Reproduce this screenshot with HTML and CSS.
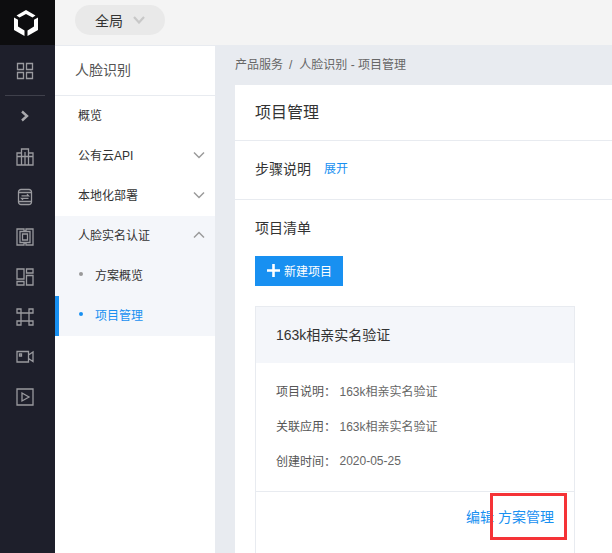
FILE: index.html
```html
<!DOCTYPE html>
<html lang="zh-CN">
<head>
<meta charset="utf-8">
<title>项目管理</title>
<link rel="stylesheet" href="styles.css">
</head>
<body>
<div class="app">
  <nav class="rail">
    <div class="logo">
      <svg width="24" height="26" viewBox="0 0 24 26"><path d="M12 0 21.500 5.500 18.500 7.500 12 4 5.500 7.500 2.500 5.500Z M0 7.500 4 9.700V16.500L10.500 20.500V26L0 20Z M24 7.500V20L13.500 26V20.500L20 16.500V9.700Z" fill="#fff"/></svg>
    </div>
    <div class="rail-item first">
      <svg class="ri" width="18" height="18" viewBox="0 0 18 18"><path d="M1.500 1.500h6v6h-6z M10.500 1.500h6v6h-6z M1.500 10.500h6v6h-6z M10.500 10.500h6v6h-6z"/></svg>
    </div>
    <div class="rail-sep"></div>
    <div class="rail-item rail-toggle">
      <svg width="10" height="12" viewBox="0 0 10 12"><path d="M2 1.500 7 6 2 10.500" fill="none" stroke="#a9a9ad" stroke-width="2.400"/></svg>
    </div>
    <div class="rail-item">
      <svg class="ri" width="18" height="18" viewBox="0 0 18 18"><path d="M1 5h4.500V1h7v4H17v12H1z M5.500 5v12 M12.500 5v12 M9 4v13 M1 8.500h16"/></svg>
    </div>
    <div class="rail-item">
      <svg class="ri" width="18" height="18" viewBox="0 0 18 18"><path d="M5 1.500h8a2.500 2.500 0 0 1 2.500 2.500v10a2.500 2.500 0 0 1-2.500 2.500H5A2.500 2.500 0 0 1 2.500 14V4A2.500 2.500 0 0 1 5 1.500z M3 4.500h12 M3 13.500h12 M5.500 7.800h7L11 6.300 M12.500 10.300h-7L7 11.800"/></svg>
    </div>
    <div class="rail-item">
      <svg class="ri" width="18" height="18" viewBox="0 0 18 18"><path d="M1 1h7v2h2V1h7v16h-7v-2H8v2H1z M4 3.500h10v11H4z M6.500 6h5v6h-5z"/></svg>
    </div>
    <div class="rail-item">
      <svg class="ri" width="18" height="18" viewBox="0 0 18 18"><path d="M1 1h7v10H1z M10.500 1h6.500v4h-6.500z M10.500 7.500h6.500v9.500h-6.500z M1 13.500h7v3.500H1z"/></svg>
    </div>
    <div class="rail-item">
      <svg class="ri" width="18" height="18" viewBox="0 0 18 18"><path d="M1 1h4v4H1z M13 1h4v4h-4z M1 13h4v4H1z M13 13h4v4h-4z M5 5h8v8H5z"/></svg>
    </div>
    <div class="rail-item">
      <svg class="ri" width="18" height="18" viewBox="0 0 18 18"><path d="M1 3.500h11.500v10.500H1z M12.500 7 17 4v9.500L12.500 10.500 M3.500 6h2v2h-2z"/></svg>
    </div>
    <div class="rail-item">
      <svg class="ri" width="18" height="18" viewBox="0 0 18 18"><path d="M1 1h16v16H1z M6 5l7 4-7 4z"/></svg>
    </div>
  </nav>
  <div class="body">
    <header class="topbar">
      <div class="scope">
        <span>全局</span>
        <svg width="12" height="8" viewBox="0 0 12 8"><path d="M1 1 6 6.500 11 1" fill="none" stroke="#c8c8c8" stroke-width="2.200"/></svg>
      </div>
    </header>
    <div class="columns">
      <aside class="side">
        <div class="side-title">人脸识别</div>
        <ul class="menu">
          <li class="menu-row">概览</li>
          <li class="menu-row">公有云API<svg class="chev" width="12" height="8" viewBox="0 0 12 8"><path d="M1 1.500 6 6.500 11 1.500"/></svg></li>
          <li class="menu-row">本地化部署<svg class="chev" width="12" height="8" viewBox="0 0 12 8"><path d="M1 1.500 6 6.500 11 1.500"/></svg></li>
          <li class="menu-group">
            <div class="menu-row">人脸实名认证<svg class="chev" width="12" height="8" viewBox="0 0 12 8"><path d="M1 6.500 6 1.500 11 6.500"/></svg></div>
            <div class="sub-row"><i class="dot"></i>方案概览</div>
            <div class="sub-row active"><i class="dot"></i>项目管理</div>
          </li>
        </ul>
      </aside>
      <main class="main">
        <div class="crumbs"><span>产品服务</span><span class="crumb-sep">/</span><span>人脸识别 - 项目管理</span></div>
        <section class="panel">
          <h1 class="panel-title">项目管理</h1>
          <div class="steps"><span>步骤说明</span><a class="link">展开</a></div>
          <div class="list">
            <div class="list-title">项目清单</div>
            <button class="btn-new"><svg width="13" height="13" viewBox="0 0 13 13"><path d="M5.200 0h2.600v5.200H13v2.600H7.800V13H5.200V7.800H0V5.200h5.200z" fill="#fff"/></svg>新建项目</button>
            <article class="card">
              <div class="card-head">163k相亲实名验证</div>
              <dl class="card-body">
                <div class="field"><dt>项目说明：</dt><dd>163k相亲实名验证</dd></div>
                <div class="field"><dt>关联应用：</dt><dd>163k相亲实名验证</dd></div>
                <div class="field"><dt>创建时间：</dt><dd>2020-05-25</dd></div>
              </dl>
              <div class="card-foot">
                <a class="link">编辑</a>
                <a class="link mark">方案管理</a>
              </div>
            </article>
          </div>
        </section>
      </main>
    </div>
  </div>
</div>
</body>
</html>
```
FILE: styles.css
```css
* { box-sizing: border-box; }
html, body { margin: 0; height: 100%; overflow: hidden; }
body {
  font-family: "Liberation Sans", "Noto Sans CJK SC", sans-serif;
  font-size: 12px;
  color: #333;
  background: #fff;
}
.app { display: flex; height: 553px; }
.rail { width: 55px; flex: none; background: #1e1f2b; display: flex; flex-direction: column; }
.logo { height: 45px; background: #0d0d0f; display: flex; align-items: center; justify-content: center; padding-right: 3px; }
.rail-item { height: 40px; display: flex; align-items: center; justify-content: center; padding-right: 5px; flex: none; }
.rail-item.first { height: 50px; padding-top: 1px; }
.rail-sep { height: 1px; margin: 0 10px 0 5px; background: #3f404b; flex: none; }
.rail-toggle { height: 41px; padding-bottom: 2px; }
.ri { fill: none; stroke: #9a9a9f; stroke-width: 1.300; }
.body { flex: 1; min-width: 0; display: flex; flex-direction: column; }
.topbar { height: 45px; flex: none; background: #f4f4f4; padding: 5px 20px; }
.scope { width: 90px; height: 30px; border-radius: 15px; background: #e9e9e9; display: flex; align-items: center; gap: 10px; padding-left: 20px; font-size: 14px; color: #333; }
.columns { flex: 1; display: flex; min-height: 0; }
.side { width: 160px; flex: none; background: #fff; }
.side-title { height: 51px; padding: 0 20px; line-height: 49px; font-size: 14px; color: #555; border-bottom: 1px solid #e8ebf0; border-top: 1px solid #e8ebf0; }
.menu { list-style: none; margin: 0; padding: 0; }
.menu-row { height: 40px; padding: 0 10px 4px 23px; display: flex; align-items: center; justify-content: space-between; color: #333; }
.chev { fill: none; stroke: #9b9b9b; stroke-width: 1.500; margin-top: 2px; }
.menu-group { background: #f4f6fa; }
.sub-row { height: 40px; padding: 0 0 4px 24px; display: flex; align-items: center; gap: 12px; color: #333; border-left: 0 solid #1890f1; }
.dot { width: 4px; height: 4px; border-radius: 50%; background: #999; }
.sub-row.active { color: #1890f1; border-left-width: 4px; padding-left: 20px; }
.sub-row.active .dot { background: #1890f1; }
.main { flex: 1; min-width: 0; background: #e8ebf0; padding-left: 20px; }
.crumbs { height: 40px; line-height: 40px; color: #666; display: flex; }
.crumb-sep { margin: 0 7px 0 6px; }
.panel { background: #fff; height: 468px; overflow: hidden; }
.panel-title { margin: 0; height: 56px; line-height: 56px; padding-left: 20px; font-size: 16px; font-weight: 400; color: #333; border-bottom: 1px solid #e8ebf0; }
.steps { height: 59px; padding: 0 0 5px 20px; display: flex; align-items: center; gap: 13px; font-size: 14px; border-bottom: 1px solid #e8ebf0; }
.link { color: #1890f1; font-size: 12px; }
.list { padding: 0 37px 0 20px; }
.list-title { height: 56px; line-height: 56px; font-size: 14px; }
.btn-new { display: flex; align-items: center; gap: 4px; width: 88px; height: 30px; padding: 0 0 2px 12px; border: 0; background: #1890f1; color: #fff; font: inherit; font-size: 12px; margin-bottom: 20px; }
.card { width: 320px; height: 260px; border: 1px solid #e8ebf0; }
.card-head { height: 56px; line-height: 56px; padding-left: 20px; font-size: 14px; background: #f4f6fa; }
.card-body { margin: 0; height: 129px; padding: 11px 20px 0; border-bottom: 1px solid #e8ebf0; }
.field { display: flex; height: 35px; align-items: center; padding-bottom: 2px; color: #666; }
.field dt { width: 63.500px; color: #555; }
.field dd { margin: 0; }
.card-foot { display: flex; justify-content: flex-end; gap: 4px; padding: 14px 20px 0 0; position: relative; }
.card-foot .link { font-size: 14px; }
.mark { position: relative; }
.mark::after { content: ""; position: absolute; left: -8px; right: -13px; top: -13px; height: 41px; border: 3px solid #f53337; }
```
